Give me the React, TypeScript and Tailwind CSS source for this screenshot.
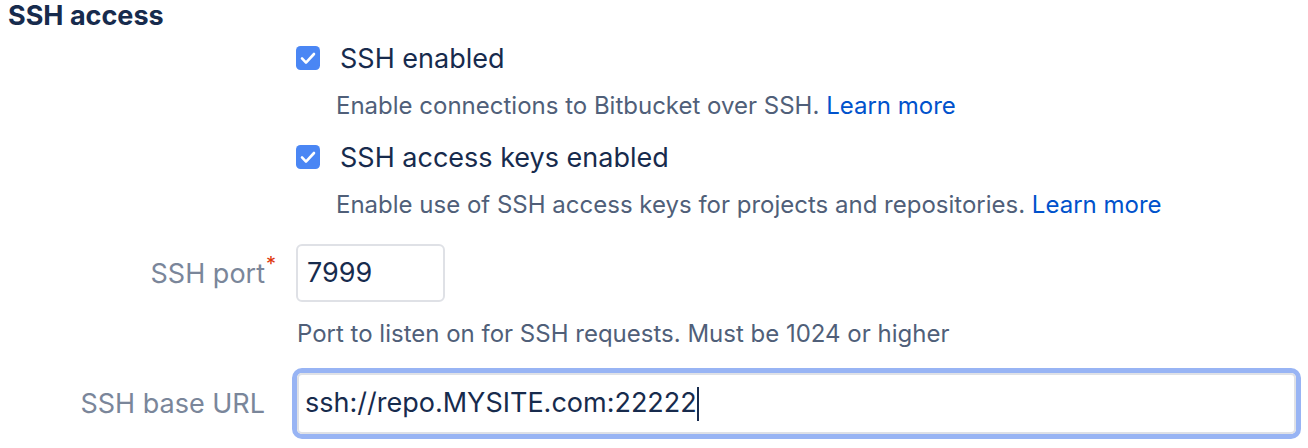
import React from "react";

function CheckIcon() {
  return (
    <svg viewBox="0 0 24 24" className="w-[24px] h-[24px]">
      <rect x="0" y="0" width="24" height="24" rx="4.5" fill="#4a86f4" />
      <path d="M6 12.4 L10 16.6 L18 8" fill="none" stroke="#ffffff" strokeWidth="2.6" strokeLinecap="round" strokeLinejoin="round" />
    </svg>
  );
}

function CheckRow({ label, desc }: { label: string; desc: string }) {
  return (
    <div className="flex flex-col">
      <div className="flex items-center h-[24px]">
        <CheckIcon />
        <span className="ml-[20px] text-[27px] leading-none text-[#172b4d]">{label}</span>
      </div>
      <div className="ml-[40px] mt-[24px] text-[24px] leading-none text-[#505f79]">
        {desc} <span className="text-[#0052cc]">Learn more</span>
      </div>
    </div>
  );
}

export default function App() {
  return (
    <div className="w-[1308px] h-[448px] bg-white overflow-hidden" style={{ fontFamily: "Inter, 'Noto Sans', sans-serif" }}>
      <h2 className="pl-[8px] pt-[1px] text-[27px] leading-[30px] font-bold text-[#172b4d]">SSH access</h2>

      <div className="flex flex-col">
        <div className="pl-[296px] mt-[15px]">
          <CheckRow label="SSH enabled" desc="Enable connections to Bitbucket over SSH." />
        </div>
        <div className="pl-[296px] mt-[27px]">
          <CheckRow label="SSH access keys enabled" desc="Enable use of SSH access keys for projects and repositories." />
        </div>

        {/* SSH port */}
        <div className="flex items-center mt-[27px]">
          <div className="w-[265px] text-right text-[27px] leading-none text-[#7a869a] relative">
            SSH port
            <span className="absolute -right-[11px] -top-[6px] text-[20px] text-[#de350b]">*</span>
          </div>
          <div className="ml-[31px] w-[149px] h-[58px] border-2 border-[#dfe1e6] rounded-[6px] flex items-center px-[9px] text-[27px] text-[#172b4d]">
            7999
          </div>
        </div>
        <div className="pl-[297px] mt-[20px] text-[24px] leading-none text-[#505f79]">
          Port to listen on for SSH requests. Must be 1024 or higher
        </div>

        {/* SSH base URL */}
        <div className="flex items-center mt-[22px]">
          <div className="w-[265px] text-right text-[27px] leading-none text-[#7a869a]">SSH base URL</div>
          <div className="ml-[27px] w-[1009px] h-[71px] rounded-[10px] border-[5px] border-[#98b4f4]">
            <div className="h-full w-full border-2 border-[#dfe1e6] rounded-[5px] flex items-center px-[6px] text-[27px] text-[#172b4d]">
              <span>ssh://repo.MYSITE.com:22222</span>
              <span className="w-[2px] h-[34px] bg-[#172b4d]"></span>
            </div>
          </div>
        </div>
      </div>
    </div>
  );
}
